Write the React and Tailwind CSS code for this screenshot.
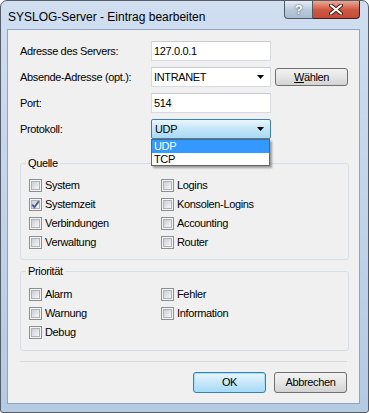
import { Fragment } from 'react'

const sourceRows = [
  ['System', false, 'Logins', false],
  ['Systemzeit', true, 'Konsolen-Logins', false],
  ['Verbindungen', false, 'Accounting', false],
  ['Verwaltung', false, 'Router', false],
]

const priorityRows = [
  ['Alarm', 'Fehler'],
  ['Warnung', 'Information'],
  ['Debug', null],
]

function Check({ checked }) {
  return (
    <span className="flex h-[13px] w-[13px] shrink-0 items-center justify-center border border-[#8e8f8f] bg-[#f4f4f4]">
      <span className="relative h-[9px] w-[9px] border border-[#aeb3b9] bg-gradient-to-br from-[#cbcfd5] to-[#f6f6f6]">
        {checked && (
          <svg className="absolute left-[-2px] top-[-2px]" width="11" height="11" viewBox="0 0 11 11">
            <path d="M2.2 5.6 L4.4 8.2 L8.8 2.2" fill="none" stroke="#4a5c94" strokeWidth="1.9" />
          </svg>
        )}
      </span>
    </span>
  )
}

function CheckItem({ label, checked }) {
  return (
    <div className="flex h-[19px] items-center gap-[3px]">
      <Check checked={checked} />
      <span>{label}</span>
    </div>
  )
}

function Arrow() {
  return (
    <svg width="7" height="4" viewBox="0 0 7 4">
      <polygon points="0,0 7,0 3.5,4" fill="#000" />
    </svg>
  )
}

function Group({ title, children, className = '' }) {
  return (
    <fieldset className={`ml-[12px] w-[329px] rounded-[3px] border border-[#d5dfe5] px-[8px] ${className}`}>
      <legend className="ml-[-3px] px-[2px] leading-[13px]">{title}</legend>
      {children}
    </fieldset>
  )
}

export default function App() {
  return (
    <div className="h-[413px] w-[369px] bg-white font-['Liberation_Sans',Arial,sans-serif] text-[11px] tracking-[-0.35px] text-black">
      <div className="flex h-full flex-col rounded-t-[7px] rounded-b-[3px] border border-[#555d68] bg-gradient-to-b from-[#d0def0] via-[#c1d4ea] to-[#b5cae3] pb-[8px] pl-[6px] pr-[8px]">
        {/* title bar */}
        <div className="flex h-[28px] items-start justify-between">
          <span className="mt-[7px] pl-[1px] text-[12px] tracking-normal text-black">SYSLOG-Server - Eintrag bearbeiten</span>
          <div className="flex">
            <div className="flex h-[18px] w-[29px] items-center justify-center rounded-bl-[4px] border border-t-0 border-[#4f5b6b] bg-gradient-to-b from-[#e6edf5] via-[#bccbdc] to-[#a9bcd1] text-[13px] font-bold text-white [text-shadow:0_0_2px_#233040]">
              ?
            </div>
            <div className="flex h-[18px] w-[47px] items-center justify-center rounded-br-[4px] border border-l-0 border-t-0 border-[#45201a] bg-gradient-to-b from-[#eaa896] via-[#cf5a43] to-[#c44a35]">
              <svg width="14" height="11" viewBox="0 0 14 11">
                <path d="M2 1.5 L12 9.5 M12 1.5 L2 9.5" stroke="#3b1a14" strokeWidth="4" strokeLinecap="round" />
                <path d="M2 1.5 L12 9.5 M12 1.5 L2 9.5" stroke="#fff" strokeWidth="2.2" strokeLinecap="round" />
              </svg>
            </div>
          </div>
        </div>

        {/* client area */}
        <div className="flex flex-1 flex-col border border-[#8fa4bf] bg-[#f0f0f0] pt-[11px]">
          <div className="flex flex-col gap-[6px] pl-[12px]">
            <div className="flex h-[20px] items-center">
              <span className="w-[131px]">Adresse des Servers:</span>
              <div className="flex h-[20px] w-[120px] items-center border border-[#d7dbe1] border-t-[#c8ccd2] bg-white pl-[2px]">127.0.0.1</div>
            </div>
            <div className="flex h-[20px] items-center">
              <span className="w-[131px]">Absende-Adresse (opt.):</span>
              <div className="flex h-[20px] w-[120px] items-center justify-between border border-[#d7dbe1] border-t-[#c8ccd2] bg-white pl-[2px] pr-[6px]">
                <span>INTRANET</span>
                <Arrow />
              </div>
              <div className="ml-[4px] flex h-[18px] w-[73px] items-center justify-center rounded-[3px] border border-[#707070] bg-gradient-to-b from-[#f2f2f2] via-[#e6e6e6] to-[#d2d2d2]">
                <span><span className="underline">W</span>ählen</span>
              </div>
            </div>
            <div className="flex h-[20px] items-center">
              <span className="w-[131px]">Port:</span>
              <div className="flex h-[20px] w-[120px] items-center border border-[#d7dbe1] border-t-[#c8ccd2] bg-white pl-[2px]">514</div>
            </div>
            <div className="relative flex h-[20px] items-center">
              <span className="w-[131px]">Protokoll:</span>
              <div className="flex h-[20px] w-[120px] items-center justify-between rounded-[2px] border border-[#3c7fb1] bg-gradient-to-b from-[#eaf6fd] via-[#c4e6f8] to-[#a7d9f5] pl-[3px] pr-[6px]">
                <span>UDP</span>
                <Arrow />
              </div>
              {/* open drop-down list */}
              <div className="absolute left-[131px] top-[20px] z-10 w-[119px] border border-[#646464] bg-white shadow-[2px_2px_2px_rgba(0,0,0,0.35)]">
                <div className="flex h-[13px] items-center bg-[#3399ff] pl-[2px] text-white">UDP</div>
                <div className="flex h-[12px] items-center pl-[2px]">TCP</div>
              </div>
            </div>
          </div>

          <Group title="Quelle" className="mt-[18px] pb-[7px] pt-[6px]">
            <div className="grid grid-cols-[132px_1fr]">
              {sourceRows.map(([a, ac, b, bc]) => (
                <Fragment key={a}>
                  <CheckItem label={a} checked={ac} />
                  <CheckItem label={b} checked={bc} />
                </Fragment>
              ))}
            </div>
          </Group>

          <Group title="Priorität" className="mt-[5px] pb-[8px] pt-[7px]">
            <div className="grid grid-cols-[132px_1fr]">
              {priorityRows.map(([a, b]) => (
                <Fragment key={a}>
                  <CheckItem label={a} />
                  {b ? <CheckItem label={b} /> : <div />}
                </Fragment>
              ))}
            </div>
          </Group>

          <div className="mx-[12px] mt-[10px] border-t border-[#d8d8d8]" />

          <div className="mt-[10px] flex justify-end gap-[8px] pr-[12px]">
            <div className="flex h-[21px] w-[73px] items-center justify-center rounded-[3px] border border-[#3c7fb1] bg-gradient-to-b from-[#eaf6fd] via-[#c6e7f9] to-[#a7d9f5] shadow-[inset_0_0_0_1px_#9fe0fc]">
              OK
            </div>
            <div className="flex h-[21px] w-[73px] items-center justify-center rounded-[3px] border border-[#707070] bg-gradient-to-b from-[#f2f2f2] via-[#e6e6e6] to-[#d2d2d2]">
              Abbrechen
            </div>
          </div>
        </div>
      </div>
    </div>
  )
}
